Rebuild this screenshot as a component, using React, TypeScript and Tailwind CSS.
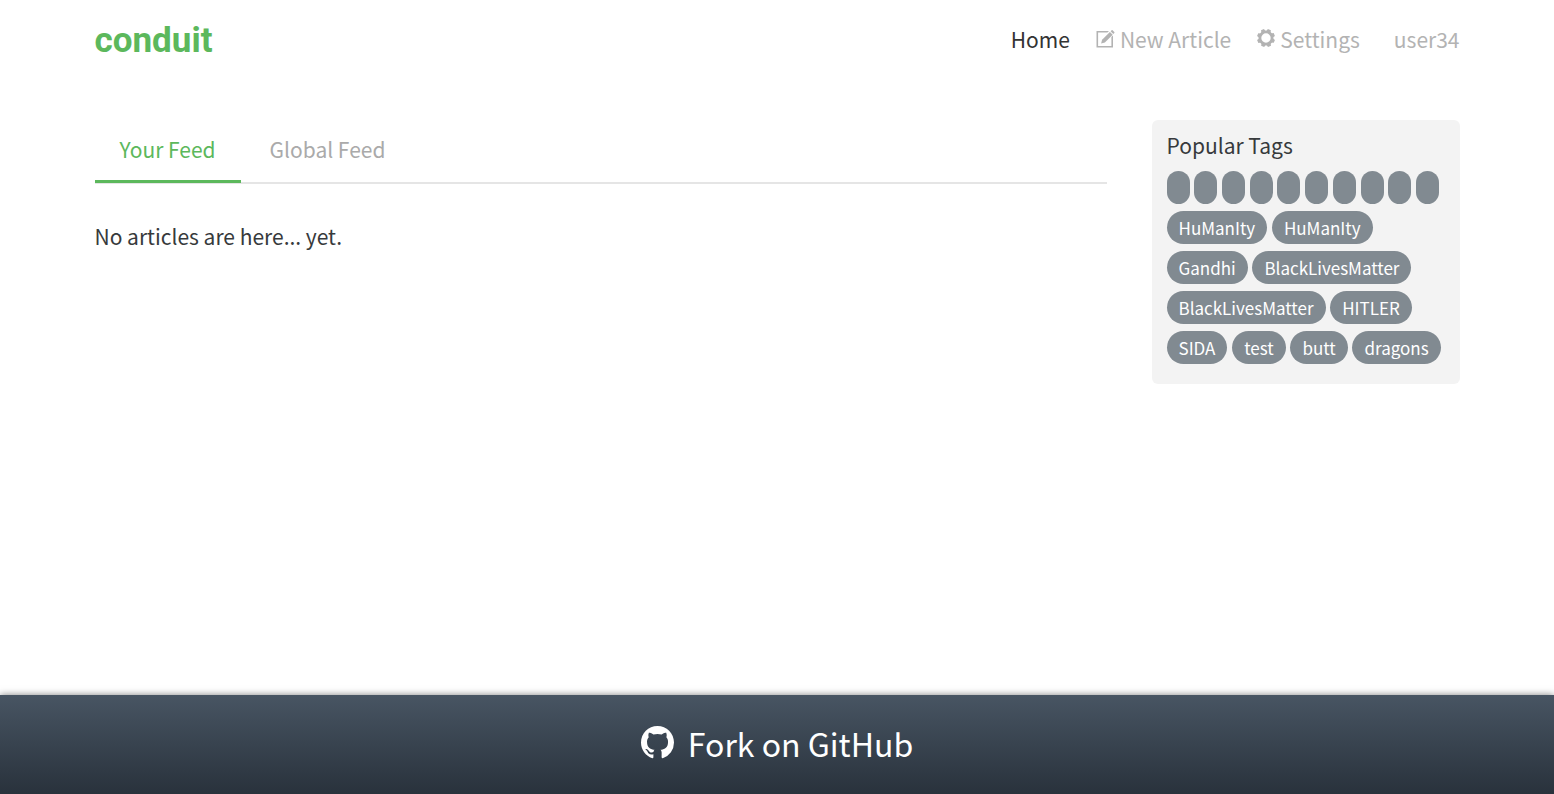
import { Fragment } from 'react';

const tags = [
  '', '', '', '', '', '', '', '', '', '',
  'HuManIty', 'HuManIty', 'Gandhi', 'BlackLivesMatter', 'BlackLivesMatter',
  'HITLER', 'SIDA', 'test', 'butt', 'dragons',
];

function ComposeIcon() {
  return (
    <svg viewBox="0 0 19 18" className="h-[18px] w-[19px]" fill="currentColor" aria-hidden="true">
      <path d="M0.5 1H13L11.4 2.6H2.1V15.9H15.4V7.1L17 5.5V17.5H0.5Z" />
      <path d="M5.1 13.4L6.1 9.7L13.9 1.9L16.7 4.7L8.9 12.4Z" />
      <path d="M14.6 1.3L15.6 0.3Q16.1 -0.1 16.6 0.3L18.3 1.9Q18.7 2.4 18.3 2.9L17.3 4Z" />
    </svg>
  );
}

function GearIcon() {
  const teeth = [22, 67, 112, 157, 202, 247, 292, 337];
  return (
    <svg viewBox="0 0 18 18" className="mb-0.5 h-[18px] w-[18px]" fill="currentColor" aria-hidden="true">
      <circle cx="9" cy="9" r="6.1" fill="none" stroke="currentColor" strokeWidth="2.8" />
      {teeth.map((angle) => (
        <path key={angle} d="M6.6 3L7.4 0H10.6L11.4 3Z" transform={`rotate(${angle} 9 9)`} />
      ))}
    </svg>
  );
}

function GitHubIcon() {
  return (
    <svg viewBox="0 0 16 16" className="size-[33px]" fill="currentColor" aria-hidden="true">
      <path d="M8 0C3.58 0 0 3.58 0 8c0 3.54 2.29 6.53 5.47 7.59.4.07.55-.17.55-.38 0-.19-.01-.82-.01-1.49-2.01.37-2.53-.49-2.69-.94-.09-.23-.48-.94-.82-1.13-.28-.15-.68-.52-.01-.53.63-.01 1.08.58 1.23.82.72 1.21 1.87.87 2.33.66.07-.52.28-.87.51-1.07-1.78-.2-3.64-.89-3.64-3.95 0-.87.31-1.59.82-2.15-.08-.2-.36-1.02.08-2.12 0 0 .67-.21 2.2.82.64-.18 1.32-.27 2-.27s1.36.09 2 .27c1.53-1.04 2.2-.82 2.2-.82.44 1.1.16 1.92.08 2.12.51.56.82 1.27.82 2.15 0 3.07-1.87 3.75-3.65 3.95.29.25.54.73.54 1.48 0 1.07-.01 1.93-.01 2.2 0 .21.15.46.55.38A8.01 8.01 0 0 0 16 8c0-4.42-3.58-8-8-8Z" />
    </svg>
  );
}

export default function App() {
  return (
    <div className="flex min-h-screen flex-col bg-white font-['Noto_Sans_CJK_SC','Noto_Sans',sans-serif] text-[21px] leading-9 text-[#373a3c]">
      <header className="mx-auto flex w-full max-w-[1365px] items-center justify-between pb-[23px] pt-[21px]">
        <a href="#home" className="pt-1 font-['Roboto',sans-serif] text-[35px] font-bold leading-8 text-[#5cb85c]">conduit</a>
        <nav className="flex items-center gap-[26px] text-[#b3b3b3]">
          <a href="#home" className="text-[#333333]">Home</a>
          <a href="#editor" className="flex items-center gap-[5px]"><ComposeIcon />New Article</a>
          <a href="#settings" className="flex items-center gap-[5px]"><GearIcon />Settings</a>
          <a href="#user34" className="pl-2">user34</a>
        </nav>
      </header>

      <main className="mx-auto flex w-full max-w-[1365px] flex-1 items-start gap-[45px] pt-10">
        <section className="min-w-0 flex-1">
          <nav className="flex gap-1 border-b-2 border-[#e5e5e5]">
            <a href="#your-feed" className="-mb-px border-b-3 border-[#5cb85c] px-[25px] pb-[13px] pt-[11px] text-[#5cb85c]">Your Feed</a>
            <a href="#global-feed" className="px-[25px] pb-[13px] pt-[11px] text-[#aaaaaa]">Global Feed</a>
          </nav>
          <p className="pt-[34px]">No articles are here... yet.</p>
        </section>

        <aside className="w-[308px] rounded-md bg-[#f3f3f3] px-[15px] pb-[13px] pt-[7px]">
          <h2>Popular Tags</h2>
          <div className="pt-2 leading-10">
            {tags.map((tag, index) => (
              <Fragment key={index}>
                <a href="#tag" aria-label={tag || 'Untitled tag'} className="inline-block h-[33px] min-w-[23px] rounded-full bg-[#818a91] px-3 align-top text-[17px] leading-[33px] text-white empty:px-0">{tag}</a>{' '}
              </Fragment>
            ))}
          </div>
        </aside>
      </main>

      <footer className="bg-linear-to-b from-[#485563] to-[#29323c] shadow-[0_0_7px_rgba(0,0,0,0.5)]">
        <a href="#github" className="flex h-[99px] items-center justify-center gap-[14px] pb-1 text-[32px] leading-9 text-white">
          <GitHubIcon />
          Fork on GitHub
        </a>
      </footer>
    </div>
  );
}
